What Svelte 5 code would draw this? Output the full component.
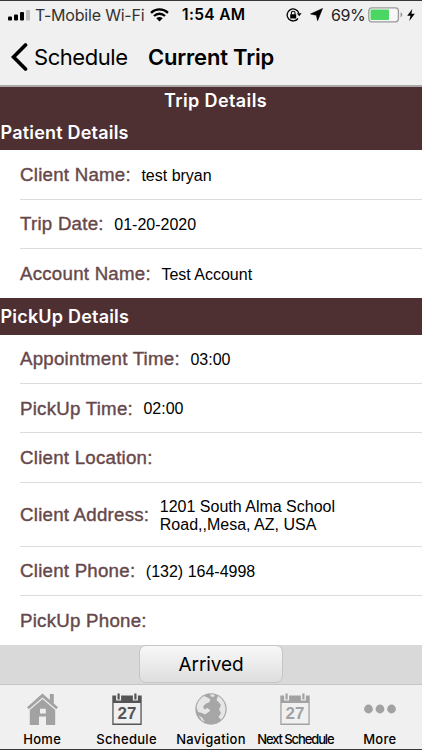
<script lang="ts">
  interface Field {
    label: string;
    value?: string;
    tall?: boolean;
  }

  const patientFields: Field[] = [
    { label: "Client Name:", value: "test bryan" },
    { label: "Trip Date:", value: "01-20-2020" },
    { label: "Account Name:", value: "Test Account" },
  ];

  const pickupFields: Field[] = [
    { label: "Appointment Time:", value: "03:00" },
    { label: "PickUp Time:", value: "02:00" },
    { label: "Client Location:" },
    {
      label: "Client Address:",
      value: "1201 South Alma School Road,,Mesa, AZ, USA",
      tall: true,
    },
    { label: "Client Phone:", value: "(132) 164-4998" },
    { label: "PickUp Phone:" },
  ];

  const tabs = [
    { id: "home", label: "Home" },
    { id: "schedule", label: "Schedule" },
    { id: "navigation", label: "Navigation" },
    { id: "next", label: "Next Schedule" },
    { id: "more", label: "More" },
  ];

  let active = $state("schedule");
</script>

{#snippet fieldList(fields: Field[])}
  <dl class="fields">
    {#each fields as field}
      <div class="field" class:tall={field.tall}>
        <dt>{field.label}</dt>
        {#if field.value}
          <dd>{field.value}</dd>
        {/if}
      </div>
    {/each}
  </dl>
{/snippet}

<div class="screen">
  <div class="status-bar">
    <svg class="signal" width="22" height="12" viewBox="0 0 22 12">
      <rect x="0" y="7.5" width="4" height="4" rx="1" />
      <rect x="6" y="5.5" width="4" height="6" rx="1" />
      <rect x="12" y="3" width="4" height="8.5" rx="1" />
      <rect x="18" y="1" width="4" height="10.5" rx="1" fill="#bdbdbd" />
    </svg>
    <span class="carrier">T-Mobile Wi-Fi</span>
    <svg class="wifi" width="19" height="14" viewBox="0 0 19 14">
      <path d="M1 4.800C5.800.2 13.200.2 18 4.800M4 8C7.100 5 11.900 5 15 8" fill="none" stroke="#000" stroke-width="2.3" />
      <path d="M9.500 13.500 6.300 10.300C8 8.700 11 8.700 12.700 10.300Z" />
    </svg>
    <span class="clock">1:54 AM</span>
    <svg class="lock" width="16" height="14" viewBox="0 0 16 14">
      <path d="M12.800 5A6 6 0 1 0 12 10.500" fill="none" stroke="#000" stroke-width="1.3" />
      <path d="M10.800 5.200H15.600L13.200 8.200Z" />
      <rect x="4.200" y="6.200" width="6" height="4.400" rx=".5" />
      <path d="M5.400 6.500V5a1.800 1.800 0 0 1 3.600 0V6.500" fill="none" stroke="#000" stroke-width="1.1" />
    </svg>
    <svg class="location" width="13" height="13" viewBox="0 0 13 13">
      <path d="M12.500.5 7.600 12.700 6.400 7.200.500 6Z" stroke="#000" stroke-width=".6" />
    </svg>
    <span class="percent">69%</span>
    <svg class="battery" width="35" height="16" viewBox="0 0 35 16">
      <rect x=".8" y=".8" width="29.600" height="14" rx="3" fill="#f7f7f7" stroke="#999" stroke-width="1.3" />
      <rect x="2.500" y="2.500" width="18.500" height="10.600" rx="1" fill="#4bd763" />
      <path d="M32.500 5.500C35 6 35 9.700 32.500 10.200Z" fill="#999" />
    </svg>
    <svg class="bolt" width="8" height="12" viewBox="0 0 8 12">
      <path d="M5.300 0 .2 6.800H3.500L2.300 12 7.800 4.800H4.400Z" />
    </svg>
  </div>

  <header class="nav-bar">
    <button class="back">
      <svg width="17" height="28" viewBox="0 0 17 28">
        <path d="M14.500 2 2.500 14 14.500 26" fill="none" stroke="#000" stroke-width="3.7" stroke-linecap="round" />
      </svg>
      <span>Schedule</span>
    </button>
    <h1>Current Trip</h1>
  </header>

  <main class="content">
    <section>
      <div class="page-title">Trip Details</div>
      <h2>Patient Details</h2>
      {@render fieldList(patientFields)}
    </section>
    <section>
      <h2>PickUp Details</h2>
      {@render fieldList(pickupFields)}
    </section>
  </main>

  <div class="action-bar">
    <button class="arrived">Arrived</button>
  </div>

  <nav class="tab-bar">
    {#each tabs as tab}
      <button
        class="tab {tab.id}"
        class:active={active === tab.id}
        onclick={() => (active = tab.id)}
      >
        <svg width="34" height="34" viewBox="0 0 34 34">
          {#if tab.id === "home"}
            <path d="M17.500 1.500 2 15.300 3.800 17.300 17.500 5.500 31.200 17.300 33 15.300 28.800 11.500V2H24.800V8Z" />
            <path fill-rule="evenodd" d="M17.500 7 4.800 18V33H14V24.500H21V33H30.200V18ZM15 16.800H20.800V21.500H15Z" />
          {:else if tab.id === "schedule" || tab.id === "next"}
            <path fill-rule="evenodd" d="M2.300 3.500H31.700V33H2.300ZM3.600 11V31.400H30.400V11Z" />
            <path class="ring" d="M8.600 1V8.500M25.400 1V8.500" />
            <path class="ring-core" d="M8.600 1.500V7.500M25.400 1.500V7.500" />
            <text x="17" y="26.500" text-anchor="middle">27</text>
          {:else if tab.id === "navigation"}
            <circle class="disc" cx="17" cy="17" r="15.700" />
            <path class="land" d="M10 4C5.500 6.500 3 11 2.600 15.500L4 20 8 21 11 22.500 14 20.500 16.500 18.500 13.500 16 10.500 17.500 9 14.500 12 11.500 15 10.500 16.500 7.500 13.500 5.500Z" />
            <path class="land" d="M24 4C28.500 6.500 31.500 11.500 31.500 17 31.500 21 30 25 27 27.800L24.500 25 27 21 25 17.500 27 13 25 10.500 22.500 8Z" />
            <path class="land" d="M16 2.300 21 2.800 19.500 5 17 4.500Z" />
            <path class="land" d="M4.500 23.500 8 25.500 11 30 8 28.500Z" />
          {:else}
            <circle cx="5.500" cy="17" r="4.400" />
            <circle cx="17" cy="17" r="4.400" />
            <circle cx="28.500" cy="17" r="4.400" />
          {/if}
        </svg>
        <span>{tab.label}</span>
      </button>
    {/each}
  </nav>
</div>

<style>
  :global(body) {
    margin: 0;
  }

  .screen {
    box-sizing: border-box;
    width: 422px;
    height: 750px;
    display: flex;
    flex-direction: column;
    overflow: hidden;
    border-top: 1px solid #38363a;
    border-bottom: 1px solid #38363a;
    background: #f0f0f0;
    color: #000;
    font-family: Inter, sans-serif;
  }

  button {
    margin: 0;
    padding: 0;
    border: none;
    background: none;
    color: inherit;
    font-family: inherit;
  }

  svg {
    display: block;
    flex: none;
  }

  /* Status bar */
  .status-bar {
    display: flex;
    align-items: center;
    flex: none;
    height: 27px;
    padding-left: 8px;
    font-size: 16px;
    white-space: nowrap;
  }

  .carrier {
    width: 109px;
    margin-left: 5px;
    color: #333;
    letter-spacing: -0.2px;
  }

  .wifi {
    margin-left: 6px;
  }

  .clock {
    width: 66px;
    margin-left: 13px;
    font-weight: 600;
    font-size: 15.5px;
    letter-spacing: 0.35px;
  }

  .lock {
    margin-left: 38px;
  }

  .location {
    margin-left: 8px;
  }

  .percent {
    width: 34px;
    margin-left: 8px;
    color: #222;
    letter-spacing: -0.4px;
  }

  .battery {
    margin-left: 3px;
  }

  .bolt {
    margin-left: 4px;
  }

  /* Navigation bar */
  .nav-bar {
    display: flex;
    align-items: center;
    flex: none;
    height: 57px;
    border-bottom: 2px solid #aaa8a8;
  }

  .back {
    display: flex;
    align-items: center;
    gap: 6px;
    width: 148px;
    padding-left: 11px;
    font-size: 22px;
    letter-spacing: -0.45px;
  }

  h1 {
    margin: 0;
    font-size: 22px;
    font-weight: 600;
    letter-spacing: -0.2px;
  }

  /* Details */
  .content {
    flex: none;
    height: 558px;
    overflow: hidden;
    background: #fff;
  }

  .page-title,
  h2 {
    margin: 0;
    background: #4e3033;
    color: #fff;
    font-size: 18px;
    font-weight: 600;
    letter-spacing: 0.2px;
  }

  .page-title {
    height: 27px;
    padding-left: 9px;
    line-height: 28px;
    text-align: center;
    letter-spacing: 0.4px;
  }

  h2 {
    height: 36.4px;
    padding-left: 0.5px;
    line-height: 37px;
  }

  .fields {
    margin: 0;
    padding-left: 20px;
  }

  .field {
    box-sizing: border-box;
    display: flex;
    align-items: center;
    height: 49.3px;
    padding-top: 1px;
    border-bottom: 1px solid #dcdcdc;
    font-family: "Liberation Sans", Arial, sans-serif;
  }

  .field:last-child {
    border-bottom: none;
  }

  .field.tall {
    height: 64px;
  }

  dt {
    color: #67484a;
    font-size: 18.7px;
    letter-spacing: 0.24px;
    white-space: nowrap;
    -webkit-text-stroke: 0.4px #67484a;
  }

  dd {
    max-width: 200px;
    margin: 1px 0 0 10.5px;
    font-size: 16px;
    line-height: 18px;
  }

  .tall dd {
    margin-top: 2px;
  }

  /* Action bar */
  .action-bar {
    display: flex;
    justify-content: center;
    flex: none;
    height: 39px;
    background: #d9d9d9;
    border-bottom: 1px solid #c6c6c6;
  }

  .arrived {
    box-sizing: border-box;
    width: 144px;
    height: 38px;
    border: 1px solid #c5c5c5;
    border-radius: 7px;
    background: linear-gradient(#f8f8f8, #dedede);
    font-size: 19px;
    letter-spacing: -0.1px;
  }

  /* Tab bar */
  .tab-bar {
    display: grid;
    grid-template-columns: repeat(5, 1fr);
    flex: 1;
  }

  .tab {
    display: flex;
    flex-direction: column;
    align-items: center;
    padding-top: 7px;
    font-size: 13px;
    font-weight: 500;
    white-space: nowrap;
    fill: #a2a2a2;
  }

  .tab.active {
    fill: #555;
  }

  .tab span {
    margin-top: 5px;
    line-height: 16px;
    letter-spacing: 0.3px;
  }

  .tab.next span {
    letter-spacing: -1.1px;
  }

  .tab text {
    font: bold 17px "Liberation Sans", Arial, sans-serif;
  }

  .ring {
    stroke: #f0f0f0;
    stroke-width: 5;
  }

  .ring-core {
    stroke: #a2a2a2;
    stroke-width: 2.2;
  }

  .active .ring-core {
    stroke: #555;
  }

  .disc {
    fill: #a6a6a6;
  }

  .land {
    fill: #e6e6e6;
  }
</style>
